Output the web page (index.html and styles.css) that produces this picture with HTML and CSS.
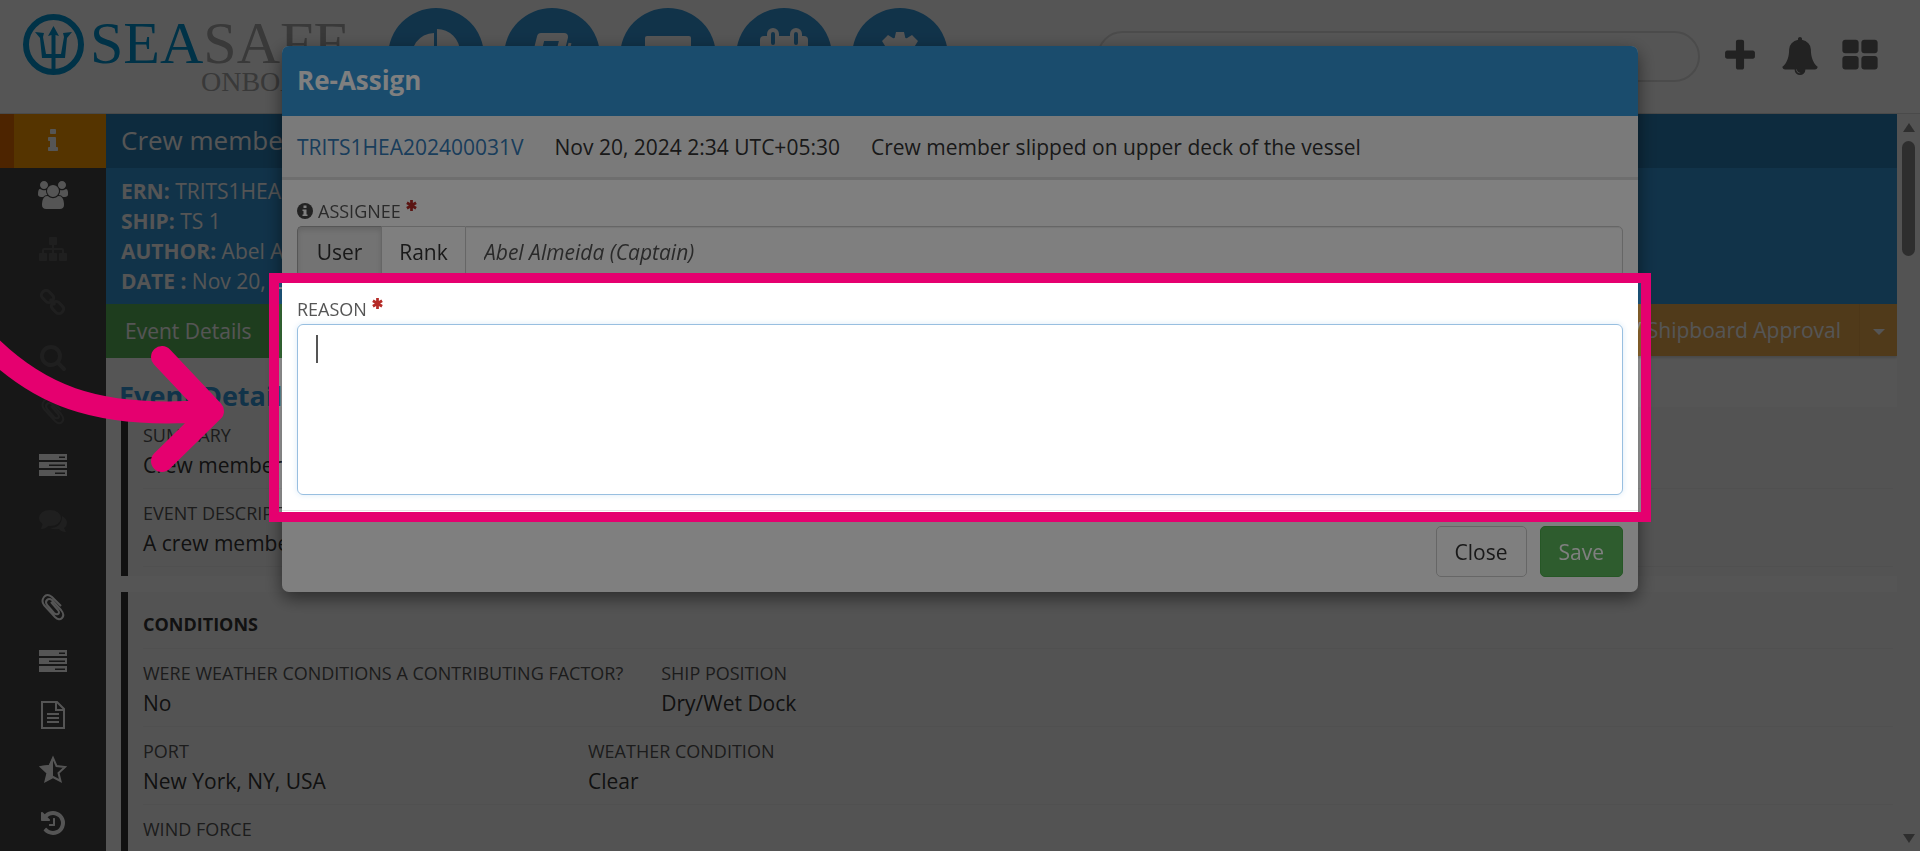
FILE: index.html
```html
<!DOCTYPE html>
<html lang="en">
<head>
    <meta charset="UTF-8">
    <meta name="viewport" content="width=device-width, initial-scale=1.0">
    <title>Sea Safe Onboard</title>
    <link rel="stylesheet" href="styles.css">
</head>
<body>
    <header class="topbar">
        <div class="logo">
            <svg class="logo-mark" viewBox="0 0 61 61">
                <circle cx="30.5" cy="30.5" r="27.5" fill="none" stroke="currentColor" stroke-width="6"/>
                <g fill="currentColor">
                    <path d="M30.5 12l5.5 10-3.5-1v36h-4V21l-3.5 1z"/>
                    <path d="M12 18l9 1-1 4 3 17h15l3-17-1-4 9-1-5 6-2 20H19l-2-20z"/>
                </g>
            </svg>
            <div class="logo-text">
                <div class="logo-name"><span>SEA</span>SAFE</div>
                <div class="logo-sub">ONBOARD</div>
            </div>
        </div>
        <nav class="main-nav">
            <button class="nav-circle" aria-label="Dashboard"><svg viewBox="0 0 48 48"><path fill="currentColor" d="M22 4v24l14 15A22 22 0 1 1 22 4zM25 0a23 23 0 0 1 23 23H25z"/></svg></button>
            <button class="nav-circle" aria-label="Library"><svg viewBox="0 0 48 48"><path fill="none" stroke="currentColor" stroke-width="8" stroke-linejoin="round" d="M13 8h23l-8 32H5z"/><path fill="none" stroke="currentColor" stroke-width="3" d="M42 14l-8 31H8"/></svg></button>
            <button class="nav-circle" aria-label="Messages"><svg viewBox="0 0 48 48"><rect x="1" y="7" width="46" height="34" rx="2" fill="currentColor"/></svg></button>
            <button class="nav-circle" aria-label="Calendar"><svg viewBox="0 0 48 48"><rect x="0" y="7" width="48" height="40" rx="4" fill="currentColor"/><rect x="7" y="-1" width="12" height="18" rx="6" fill="currentColor"/><rect x="30" y="-1" width="12" height="18" rx="6" fill="currentColor"/><path stroke="#3498db" stroke-width="4" stroke-linecap="round" d="M13 5v9M36 5v9"/><path fill="#3498db" d="M5 20h38v22H5z"/></svg></button>
            <button class="nav-circle" aria-label="Settings"><svg viewBox="0 0 48 48"><g fill="currentColor"><circle cx="24" cy="24" r="16"/><path d="M20 3h8l2 9H18zM20 45h8l2-9H18z"/><path d="M3 20v8l9 2V18zM45 20v8l-9 2V18z"/><path d="M6 12l6-6 8 5-9 9zM42 12l-6-6-8 5 9 9zM6 36l6 6 8-5-9-9zM42 36l-6 6-8-5 9-9z"/></g><circle cx="24" cy="24" r="7" fill="#3498db"/></svg></button>
        </nav>
        <input class="search" type="text" aria-label="Search">
        <div class="top-actions">
            <button aria-label="Add"><svg viewBox="0 0 1792 1792"><path d="M1600 736v192q0 40-28 68t-68 28h-416v416q0 40-28 68t-68 28h-192q-40 0-68-28t-28-68v-416h-416q-40 0-68-28t-28-68v-192q0-40 28-68t68-28h416v-416q0-40 28-68t68-28h192q40 0 68 28t28 68v416h416q40 0 68 28t28 68z"/></svg></button>
            <button aria-label="Notifications"><svg viewBox="0 0 1792 1792"><path d="M912 1696q0-16-16-16-59 0-101.5-42.5t-42.5-101.5q0-16-16-16t-16 16q0 73 51.5 124.5t124.5 51.5q16 0 16-16zm816-288q0 52-38 90t-90 38h-448q0 106-75 181t-181 75-181-75-75-181h-448q-52 0-90-38t-38-90q50-42 91-88t85-119.5 74.5-158.5 50-206 19.5-260q0-152 117-282.5t307-158.5q-8-19-8-39 0-40 28-68t68-28 68 28 28 68q0 20-8 39 190 28 307 158.5t117 282.5q0 139 19.5 260t50 206 74.5 158.5 85 119.5 91 88z"/></svg></button>
            <button aria-label="Apps"><svg viewBox="0 0 1792 1792"><path d="M832 1024v384q0 52-38 90t-90 38h-512q-52 0-90-38t-38-90v-384q0-52 38-90t90-38h512q52 0 90 38t38 90zm0-768v384q0 52-38 90t-90 38h-512q-52 0-90-38t-38-90v-384q0-52 38-90t90-38h512q52 0 90 38t38 90zm896 768v384q0 52-38 90t-90 38h-512q-52 0-90-38t-38-90v-384q0-52 38-90t90-38h512q52 0 90 38t38 90zm0-768v384q0 52-38 90t-90 38h-512q-52 0-90-38t-38-90v-384q0-52 38-90t90-38h512q52 0 90 38t38 90z"/></svg></button>
        </div>
    </header>

    <div class="layout">
        <nav class="sidebar">
            <button class="side-item active" aria-label="Info"><svg viewBox="0 0 1792 1792"><path d="M1216 1344v128q0 26-19 45t-45 19h-512q-26 0-45-19t-19-45v-128q0-26 19-45t45-19h64v-384h-64q-26 0-45-19t-19-45v-128q0-26 19-45t45-19h384q26 0 45 19t19 45v576h64q26 0 45 19t19 45zm-128-1152v192q0 26-19 45t-45 19h-256q-26 0-45-19t-19-45v-192q0-26 19-45t45-19h256q26 0 45 19t19 45z"/></svg></button>
            <button class="side-item" aria-label="People"><svg class="wide" viewBox="0 0 1920 1792"><path d="M593 896q-162 5-265 128h-134q-82 0-138-40.5t-56-118.5q0-353 124-353 6 0 43.5 21t97.5 42.5 119 21.5q67 0 133-23-5 37-5 66 0 159 90 256zm1071 637q0 120-73 189.5t-194 69.5h-874q-121 0-194-69.5t-73-189.5q0-53 3.5-103.5t14-109 26.5-108.5 43-97.5 62-81 85.5-53.5 111.5-20q10 0 43 21.5t73 48 107 48 135 21.5 135-21.5 107-48 73-48 43-21.5q61 0 111.5 20t85.5 53.5 62 81 43 97.5 26.5 108.5 14 109 3.5 103.5zm-1024-1277q0 106-75 181t-181 75-181-75-75-181 75-181 181-75 181 75 75 181zm704 384q0 159-112.5 271.5t-271.5 112.5-271.5-112.5-112.5-271.5 112.5-271.5 271.5-112.5 271.5 112.5 112.5 271.5zm576 225q0 78-56 118.5t-138 40.5h-134q-103-123-265-128 90-97 90-256 0-29-5-66 66 23 133 23 59 0 119-21.5t97.5-42.5 43.5-21q124 0 124 353zm-128-609q0 106-75 181t-181 75-181-75-75-181 75-181 181-75 181 75 75 181z"/></svg></button>
            <button class="side-item disabled" aria-label="Structure"><svg viewBox="0 0 28 28"><rect x="10" y="2" width="8" height="8" rx="1"/><rect x="0" y="18" width="8" height="8" rx="1"/><rect x="10" y="18" width="8" height="8" rx="1"/><rect x="20" y="18" width="8" height="8" rx="1"/><path d="M13 10h2v3h8q2 0 2 2v3h-2v-3h-8v3h-2v-3H5v3H3v-3q0-2 2-2h8z"/></svg></button>
            <button class="side-item disabled" aria-label="Links"><svg viewBox="0 0 28 28"><g class="line" stroke-width="3"><rect x="2" y="3" width="13" height="9" rx="4" transform="rotate(45 8.5 7.500)"/><rect x="12" y="14" width="13" height="9" rx="4" transform="rotate(45 18.5 18.500)"/><path d="M11 10l5 6"/></g></svg></button>
            <button class="side-item disabled" aria-label="Search"><svg viewBox="0 0 1792 1792"><path d="M1216 832q0-185-131.5-316.5t-316.5-131.5-316.5 131.5-131.5 316.5 131.5 316.5 316.5 131.5 316.5-131.5 131.5-316.5zm512 832q0 52-38 90t-90 38q-54 0-90-38l-343-342q-179 124-399 124-143 0-273.5-55.5t-225-150-150-225-55.5-273.5 55.5-273.5 150-225 225-150 273.5-55.5 273.5 55.5 225 150 150 225 55.5 273.5q0 220-124 399l343 343q37 37 37 90z"/></svg></button>
            <button class="side-item disabled" aria-label="Files"><svg viewBox="0 0 28 28"><path class="line" stroke-width="2" d="M12 9l7 8q2 3 0 4t-4-1L8 12q-2-3 0-5t5 0l9 10q4 5 1 8t-7-1L5 12q-3-4 0-8t8 0l9 9"/></svg></button>
            <button class="side-item" aria-label="Tasks"><svg viewBox="0 0 28 28"><path fill-rule="evenodd" d="M0 3h28v6H0zM20 5.5v1.5h6V5.5zM0 11h28v6H0zM10 13.5V15h16v-1.5zM0 19h28v6H0zM16 21.5V23h10v-1.5z"/></svg></button>
            <button class="side-item disabled" aria-label="Comments"><svg viewBox="0 0 28 28"><ellipse cx="11" cy="13" rx="11" ry="8"/><path d="M4 18l-2 6q5 0 8-4zM23 11q5 3 5 7 0 3-3 5l2 4q-5 0-7-3-5 1-9-1 12 0 12-12z"/></svg></button>
            <button class="side-item gap-before" aria-label="Attachments"><svg viewBox="0 0 28 28"><path class="line" stroke-width="2" d="M12 9l7 8q2 3 0 4t-4-1L8 12q-2-3 0-5t5 0l9 10q4 5 1 8t-7-1L5 12q-3-4 0-8t8 0l9 9"/></svg></button>
            <button class="side-item" aria-label="Forms"><svg viewBox="0 0 28 28"><path fill-rule="evenodd" d="M0 3h28v6H0zM20 5.5v1.5h6V5.5zM0 11h28v6H0zM10 13.5V15h16v-1.5zM0 19h28v6H0zM16 21.5V23h10v-1.5z"/></svg></button>
            <button class="side-item" aria-label="Report"><svg viewBox="0 0 28 28"><path class="line" stroke-width="2" d="M3 1h15l7 7v19H3zM17 1v8h8M8 13h12M8 17h12M8 21h12"/></svg></button>
            <button class="side-item" aria-label="Rating"><svg viewBox="0 0 28 28"><path class="line" stroke-width="2" d="M14 3l3.5 8 8.5 1-6.5 6 2 8-7.5-4-7.5 4 2-8L2 12l8.5-1z"/><path d="M14 2v20l-8 5 2-9-7-7 9-1z"/></svg></button>
            <button class="side-item" aria-label="History"><svg viewBox="0 0 1792 1792"><path d="M1664 896q0 156-61 298t-164 245-245 164-298 61q-172 0-327-72.5t-264-204.5q-7-10-6.5-22.5t8.5-20.5l137-138q10-9 25-9 16 2 23 12 73 95 179 147t225 52q104 0 198.5-40.5t163.5-109.5 109.5-163.5 40.5-198.5-40.5-198.5-109.5-163.5-163.5-109.5-198.5-40.5q-98 0-188 35.5t-160 101.5l137 138q31 30 14 69-17 40-59 40h-448q-26 0-45-19t-19-45v-448q0-42 40-59 39-17 69 14l130 129q107-101 244.5-156.5t284.5-55.5q156 0 298 61t245 164 164 245 61 298zm-640-288v448q0 14-9 23t-23 9h-320q-14 0-23-9t-9-23v-64q0-14 9-23t23-9h224v-352q0-14 9-23t23-9h64q14 0 23 9t9 23z"/></svg></button>
        </nav>

        <main class="content">
            <h1 class="page-title">Crew member slipped on upper deck of the vessel</h1>
            <div class="event-meta">
                <div><b>ERN:</b> TRITS1HEA202400031V</div>
                <div><b>SHIP:</b> TS 1</div>
                <div><b>AUTHOR:</b> Abel Almeida</div>
                <div><b>DATE :</b> Nov 20, 2024 2:34 UTC+05:30</div>
            </div>
            <div class="tabs">
                <button class="tab">Event Details</button>
                <div class="approval">
                    <button class="approval-main">Review / Shipboard Approval</button>
                    <button class="approval-toggle" aria-label="More"><span class="caret-down"></span></button>
                </div>
            </div>

            <h2 class="section-title">Event Details</h2>
            <section class="panel">
                <div class="row">
                    <div class="field"><div class="label">SUMMARY</div><div class="value">Crew member slipped on upper deck of the vessel</div></div>
                </div>
                <div class="row">
                    <div class="field"><div class="label">EVENT DESCRIPTION</div><div class="value">A crew member slipped on the upper deck</div></div>
                </div>
            </section>
            <section class="panel">
                <h3 class="panel-title">CONDITIONS</h3>
                <div class="row">
                    <div class="field"><div class="label">WERE WEATHER CONDITIONS A CONTRIBUTING FACTOR?</div><div class="value">No</div></div>
                    <div class="field"><div class="label">SHIP POSITION</div><div class="value">Dry/Wet Dock</div></div>
                </div>
                <div class="row">
                    <div class="field quarter"><div class="label">PORT</div><div class="value">New York, NY, USA</div></div>
                    <div class="field"><div class="label">WEATHER CONDITION</div><div class="value">Clear</div></div>
                </div>
                <div class="row">
                    <div class="field"><div class="label">WIND FORCE</div><div class="value">Calm</div></div>
                </div>
            </section>
        </main>

        <div class="scrollbar">
            <span class="scroll-up"></span>
            <span class="scroll-thumb"></span>
            <span class="scroll-down"></span>
        </div>
    </div>

    <div class="backdrop">
        <form class="modal">
            <h2 class="modal-header">Re-Assign</h2>
            <div class="modal-info">
                <a href="#">TRITS1HEA202400031V</a>
                <span>Nov 20, 2024 2:34 UTC+05:30</span>
                <span>Crew member slipped on upper deck of the vessel</span>
            </div>
            <div class="modal-body">
                <div class="form-group">
                    <label class="form-label" for="assignee">
                        <svg class="info-icon" viewBox="0 0 16 16"><circle cx="8" cy="8" r="8" fill="#444"/><path fill="#fff" d="M6.5 2.5h3v2.5h-3zM5.5 6.5h4v5h1V13h-5v-1.5h1V8h-1z"/></svg>
                        ASSIGNEE
                        <svg class="required" viewBox="0 0 12 12"><path d="M6 0v12M1 3l10 6M11 3L1 9"/></svg>
                    </label>
                    <div class="input-group">
                        <button type="button" class="toggle selected">User</button>
                        <button type="button" class="toggle">Rank</button>
                        <input type="text" id="assignee" class="assignee" value="Abel Almeida (Captain)">
                    </div>
                </div>
                <div class="form-group spotlight">
                    <label class="form-label" for="reason">
                        REASON
                        <svg class="required" viewBox="0 0 12 12"><path d="M6 0v12M1 3l10 6M11 3L1 9"/></svg>
                    </label>
                    <div class="reason-box">
                        <textarea id="reason" class="reason"></textarea>
                        <span class="text-cursor"></span>
                    </div>
                </div>
            </div>
            <div class="modal-footer">
                <button type="button" class="btn">Close</button>
                <button type="button" class="btn btn-save">Save</button>
            </div>
        </form>
    </div>

    <svg class="pointer-arrow" viewBox="0 0 240 140" fill="none" stroke="#e5006f" stroke-width="22" stroke-linecap="round" stroke-linejoin="round">
        <path d="M-20 -4C35 55 95 79 205 71M162 17l51 54-51 50"/>
    </svg>
</body>
</html>
```
FILE: styles.css
```css
:root {
    --blue: #3498db;
    --blue-dark: #2980b9;
    --green: #5cb85c;
    --orange: #f0ad4e;
    --pink: #e5006f;
    --text: #333;
}

* {
    margin: 0;
    padding: 0;
    box-sizing: border-box;
}

body {
    height: 100vh;
    overflow: hidden;
    display: flex;
    flex-direction: column;
    font-family: "Open Sans", sans-serif;
    font-size: 21px;
    line-height: 30px;
    color: var(--text);
    background: #fff;
}

button,
input,
textarea {
    font: inherit;
    color: inherit;
    border: none;
    background: none;
}

/* top bar */
.topbar {
    flex: none;
    height: 114px;
    display: flex;
    align-items: flex-start;
    padding: 8px 40px 0 23px;
    border-bottom: 1px solid #ddd;
}

.logo {
    width: 365px;
    flex: none;
    display: flex;
    gap: 6px;
    padding-top: 6px;
    color: #0096d6;
}

.logo-mark {
    width: 61px;
    height: 61px;
}

.logo-text {
    font-family: "Liberation Serif", serif;
    color: #aaa;
}

.logo-name {
    font-size: 60px;
    line-height: 58px;
}

.logo-name span {
    color: #0096d6;
}

.logo-sub {
    font-size: 28px;
    line-height: 20px;
    padding-left: 111px;
}

.main-nav {
    display: flex;
    gap: 20px;
}

.nav-circle {
    width: 96px;
    height: 96px;
    border-radius: 50%;
    background: var(--blue);
    color: #fff;
}

.nav-circle svg {
    width: 48px;
    height: 48px;
    overflow: visible;
}

.search {
    width: 603px;
    height: 51px;
    margin: 23px 0 0 auto;
    padding: 0 24px;
    border: 2px solid #e0e0e0;
    border-radius: 26px;
}

.top-actions {
    display: flex;
    gap: 20px;
    padding: 29px 0 0 20px;
}

.top-actions svg {
    display: block;
    width: 40px;
    height: 38px;
    fill: #666;
}

/* layout */
.layout {
    flex: 1;
    min-height: 0;
    display: flex;
}

.sidebar {
    width: 106px;
    flex: none;
    display: flex;
    flex-direction: column;
    background: #454545;
}

.side-item {
    flex: none;
    height: 54px;
    display: flex;
    align-items: center;
    justify-content: center;
    color: #fff;
}

.side-item svg {
    width: 28px;
    height: 28px;
    fill: currentColor;
}

.side-item .wide {
    width: 30px;
}

.side-item .line {
    fill: none;
    stroke: currentColor;
}

.side-item.active {
    background: linear-gradient(to right, #e86c00 14px, #ff9d00 14px);
}

.side-item.disabled {
    color: #5e5e5e;
}

.side-item.gap-before {
    margin-top: 34px;
}

.content {
    flex: 1;
    min-width: 0;
    overflow: hidden;
}

.page-title {
    padding: 0 15px 2px;
    font-size: 26px;
    font-weight: 400;
    line-height: 52px;
    color: #fff;
    background: var(--blue-dark);
}

.event-meta {
    padding: 8px 15px;
    color: #fff;
    background: var(--blue);
}

.tabs {
    display: flex;
    justify-content: space-between;
    align-items: flex-start;
    margin-bottom: 20px;
    color: #fff;
}

.tab {
    height: 54px;
    width: 190px;
    padding-left: 19px;
    text-align: left;
    background: var(--green);
}

.approval {
    display: flex;
    height: 52px;
    background: var(--orange);
    box-shadow: 0 2px 2px #ddd;
}

.approval-main {
    padding: 0 18px;
}

.approval-toggle {
    width: 38px;
    border-left: 1px solid #e8a548;
}

.caret-down {
    display: inline-block;
    border: 6px solid transparent;
    border-top-color: #fff;
    border-bottom: 0;
    vertical-align: middle;
}

.section-title {
    padding: 0 13px;
    font-size: 27px;
    line-height: 36px;
    color: var(--blue);
}

.panel {
    margin: 0 0 16px 15px;
    padding: 0 4px 9px 15px;
    border-left: 7px solid var(--text);
    background: #fafafa;
}

.section-title + .panel {
    margin-top: -7px;
    padding-top: 4px;
}

.row {
    display: flex;
    gap: 38px;
    padding: 9px 0 8px;
    border-bottom: 1px solid #f0f0f0;
}

.label {
    font-size: 18px;
    color: #555;
}

.quarter {
    width: 407px;
}

.panel-title {
    padding-top: 9px;
    font-size: 18px;
    line-height: 47px;
    border-bottom: 1px solid #f0f0f0;
}

.scrollbar {
    width: 23px;
    flex: none;
    display: flex;
    flex-direction: column;
    align-items: center;
    padding: 9px 0 8px;
    background: #fafafa;
}

.scroll-up,
.scroll-down {
    border: 6px solid transparent;
}

.scroll-up {
    border-top: 0;
    border-bottom: 9px solid #8a8a8a;
}

.scroll-down {
    margin-top: auto;
    border-bottom: 0;
    border-top: 9px solid #8a8a8a;
}

.scroll-thumb {
    width: 13px;
    height: 115px;
    margin-top: 9px;
    border-radius: 7px;
    background: #8a8a8a;
}

/* modal */
.backdrop {
    position: fixed;
    inset: 0;
    padding: 46px 24px;
    overflow: hidden;
    background: rgba(0, 0, 0, 0.33);
}

.modal {
    max-width: 1356px;
    margin: 0 auto;
    border-radius: 7px;
    background: #fff;
    box-shadow: 0 6px 18px rgba(0, 0, 0, 0.5);
}

.modal-header {
    padding: 0 15px 2px;
    border-radius: 7px 7px 0 0;
    font-size: 26px;
    font-weight: 700;
    line-height: 68px;
    color: #fff;
    background: var(--blue);
}

.modal-info {
    display: flex;
    gap: 31px;
    padding: 16px 15px 15px;
    border-bottom: 3px solid #dcdcdc;
    background: #f5f5f5;
}

.modal-info a {
    color: #337ab7;
    text-decoration: none;
}

.modal-body {
    display: flex;
    flex-direction: column;
    gap: 17px;
    padding: 16px 15px 15px;
}

.form-label {
    display: flex;
    align-items: center;
    gap: 5px;
    font-size: 18px;
    color: #555;
}

.info-icon {
    width: 16px;
    height: 16px;
}

.required {
    width: 11px;
    height: 11px;
    margin-bottom: 12px;
    stroke: #b52b27;
    stroke-width: 3;
}

.input-group {
    display: flex;
    height: 51px;
}

.toggle {
    width: 84px;
    border: 1px solid #ccc;
    border-right: 0;
}

.toggle.selected {
    border-color: #adadad;
    border-radius: 5px 0 0 5px;
    background: #e6e6e6;
    box-shadow: inset 0 3px 5px rgba(0, 0, 0, 0.12);
}

.assignee {
    flex: 1;
    padding: 0 18px;
    border: 1px solid #ccc;
    border-radius: 0 5px 5px 0;
    font-style: italic;
    color: #555;
    box-shadow: inset 0 1px 1px rgba(0, 0, 0, 0.08);
}

.reason-box {
    position: relative;
}

.reason {
    display: block;
    width: 100%;
    height: 171px;
    padding: 8px 18px;
    border: 1px solid #98bfe0;
    border-radius: 6px;
    resize: none;
    box-shadow: 0 0 6px #dcebf7;
}

.text-cursor {
    position: absolute;
    left: 19px;
    top: 11px;
    width: 2px;
    height: 28px;
    background: #555;
}

/* pink frame, its shadow dims the rest of the page */
.spotlight {
    position: relative;
}

.spotlight::after {
    content: "";
    position: absolute;
    inset: -21px -28px -27px;
    border: 10px solid var(--pink);
    box-shadow: 0 0 0 9999px rgba(0, 0, 0, 0.5);
    pointer-events: none;
}

.modal-footer {
    display: flex;
    justify-content: flex-end;
    gap: 13px;
    padding: 15px;
    border-top: 1px solid #e5e5e5;
}

.btn {
    height: 51px;
    padding: 0 18px;
    border: 1px solid #ccc;
    border-radius: 5px;
}

.btn-save {
    color: #fff;
    border-color: #4cae4c;
    background: var(--green);
}

.pointer-arrow {
    position: fixed;
    left: 0;
    top: 340px;
    width: 240px;
    height: 140px;
    pointer-events: none;
}
```
